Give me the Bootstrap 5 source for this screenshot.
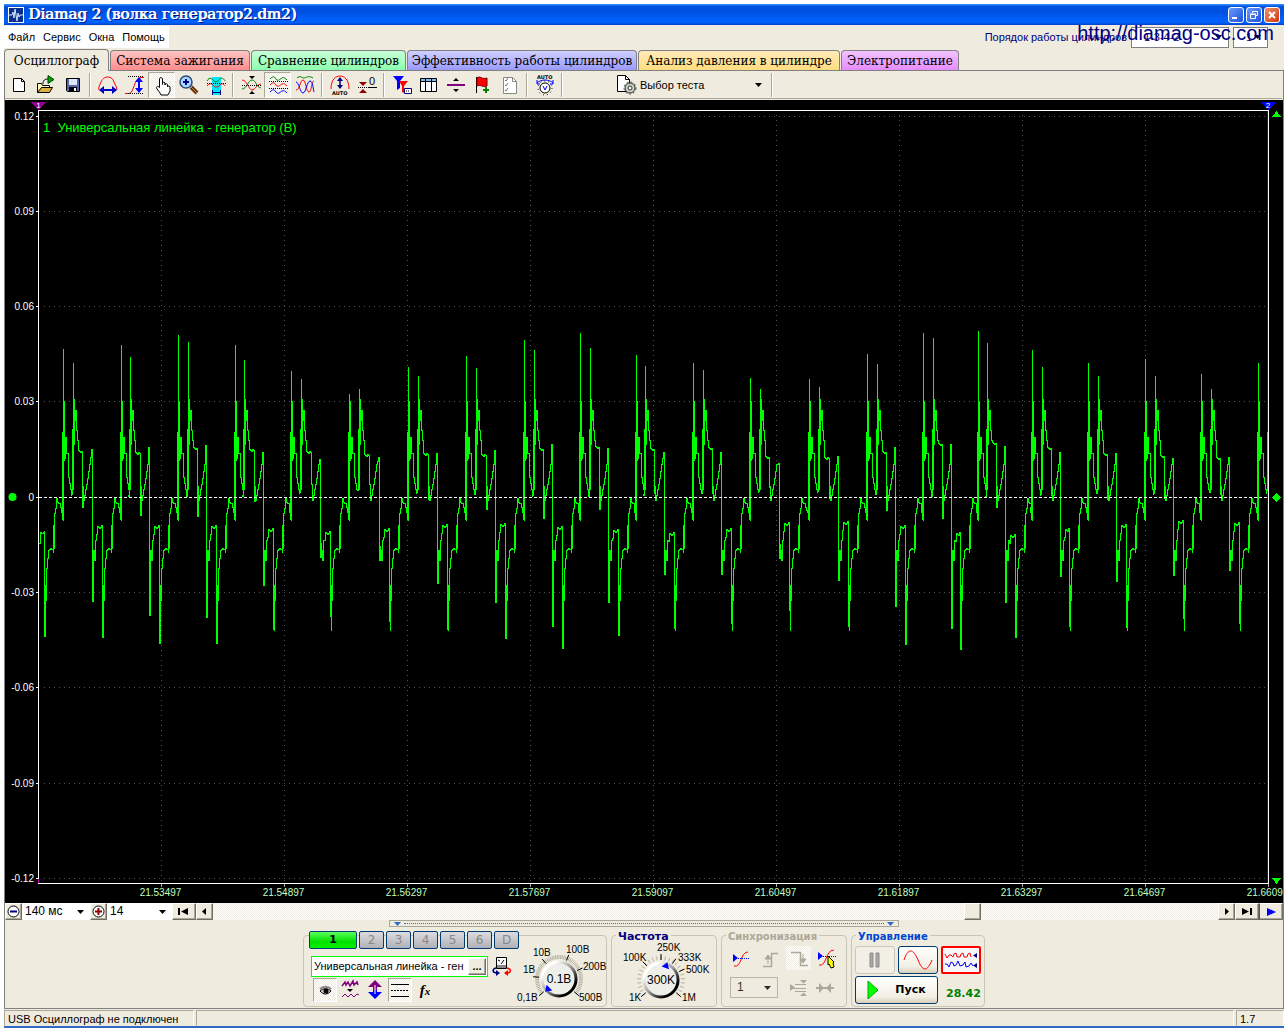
<!DOCTYPE html>
<html lang="ru">
<head>
<meta charset="utf-8">
<meta name="viewport" content="width=device-width, initial-scale=1">
<title>Diamag 2</title>
<link href="https://cdn.jsdelivr.net/npm/bootstrap@5.3.0/dist/css/bootstrap.min.css" rel="stylesheet">
<style>
:root{--face:#efebde;--edge:#aca899;--dark:#808080}
body{background:#fff;color:#000;font:11px/13px "Liberation Sans",Arial,sans-serif;padding:4px}
button,select,input{font:inherit;color:inherit;border-radius:0}
svg{display:block}
.app{min-height:calc(100vh - 8px);background:var(--face)}
.titlebar{height:21px;background:linear-gradient(#3c96ff 0,#0053e1 12%,#0050e0 35%,#0061fc 75%,#0061fc 88%,#003dc8);color:#fff;font:15px/21px "DejaVu Serif",serif;text-shadow:1px 0 #fff,2px 1px #00177a}
.wbtn{width:16px;height:16px;border:1px solid #fff;border-radius:3px;background:linear-gradient(135deg,#6a9bff,#1c4fd8);padding:0}
.wbtn.close-w{background:linear-gradient(135deg,#f09070,#d03808)}
.menubar{height:24px}
.menu-w{background:#fff;height:22px}
.menu-w a{color:#000;text-decoration:none;line-height:22px}
.order{color:navy}
.box-sel{appearance:none;background-color:#fff;border:1px solid var(--dark);height:21px;padding:0 12px}
.site{position:absolute;right:10px;top:17px;font-size:20px;line-height:24px;color:navy;text-decoration:none}
.arrow{background-image:url("data:image/svg+xml,%3Csvg xmlns='http://www.w3.org/2000/svg' width='7' height='4'%3E%3Cpath d='M0 0h7L3.5 4z'/%3E%3C/svg%3E");background-repeat:no-repeat;background-position:right 6px center}
.tabs{height:22px;gap:1px;border-bottom:1px solid var(--dark)}
.tab-i{height:20px;border:1px solid var(--dark);border-bottom:0;border-radius:4px 4px 0 0;font:12px/20px "DejaVu Serif",serif;text-align:center;color:#000;padding:0;white-space:nowrap}
.tab-i.on{height:22px;background:var(--face);width:105px;margin-bottom:-1px;position:relative;line-height:20px}
.t-r{width:140px;background:linear-gradient(#ffc4c4,#ff8c8c)}
.t-g{width:155px;background:linear-gradient(#c8ffd8,#8cffac)}
.t-b{width:230px;background:linear-gradient(#d0d0ff,#9a9aff)}
.t-y{width:202px;background:linear-gradient(#ffebb8,#ffdc80)}
.t-p{width:118px;background:linear-gradient(#f2c4ff,#e68cff)}
.frame{border:1px solid var(--dark);border-top:0}
.tools{height:28px;border-bottom:1px solid var(--edge);margin-right:1px}
.tb{width:27px;height:26px;border:1px solid transparent;background:none;padding:0;display:flex;align-items:center;justify-content:center}
.tb svg{width:24px;height:24px;overflow:visible}
.pressed{background:repeating-conic-gradient(#fff 0 25%,#efebde 0 50%) 0 0/2px 2px;border:1px solid;border-color:#aca899 #fff #fff #aca899}
.vsep{width:2px;height:24px;margin:0 3px;border-left:1px solid var(--edge);border-right:1px solid #fff}
.test{width:130px;height:24px;border:0;background-color:transparent;appearance:none;padding:2px 2px 0}
.scope{background:#000;min-height:300px;position:relative;margin-top:1px}
.scope svg{position:absolute;inset:0;width:100%;height:100%}
.scroll-r{height:17px;background:var(--face)}
.sb{height:17px;border:1px solid;border-color:#fff #716f64 #716f64 #fff;background:var(--face);padding:0;display:flex;align-items:center;justify-content:center;box-shadow:inset -1px -1px var(--edge)}
.w17{width:17px}.w24{width:24px}
.s-sel{appearance:none;border:0;background-color:#fff;height:17px;padding:0 3px;font-size:12px}
.track{background:repeating-conic-gradient(#fff 0 25%,#efebde 0 50%) 0 0/2px 2px;height:17px}
.grip{width:510px;height:7px;border:1px solid var(--edge)}
.grip i{flex:1;border-top:1px dotted #316ac5;margin:0 3px}
.bottom{height:81px;gap:4px}
.grp{position:relative;border:1px solid #c9c5b5;border-radius:4px;margin-top:8px;height:72px}
.grp-t{position:absolute;top:-6px;left:4px;padding:0 2px;background:var(--face);font:bold 10px/13px "DejaVu Sans",sans-serif;white-space:nowrap}
.ch{width:25px;height:18px;border:1px solid #003c74;border-radius:2px;background:linear-gradient(#dcdce0,#b0b0b8);color:#888;font:12px/16px "DejaVu Sans",sans-serif;padding:0}
.ch.on{width:48px;background:linear-gradient(#5cff5c,#00e000 60%,#00f000);color:#000;font-weight:bold;font-size:11px}
.chrow{gap:2px;margin-top:-5px}
.name-b{width:177px;height:21px;border:1px solid #0f0;background:#fff}
.name-b input{border:0;background:none;padding:0 2px;width:156px;outline:0}
.sm{width:24px;height:24px}
.xp{border:1px solid #003c74;border-radius:3px;background:linear-gradient(#fff,#f2efe4 75%,#d8d0bc);padding:0;display:flex;align-items:center;justify-content:center;height:28px}
.w40{width:40px}.w83{width:83px}
.xp.dis{border-color:#c9c7ba;background:#f2efe6}
.xp.red{border:2px solid red;border-radius:2px;background:#f8f6f8}
.big-t{font:bold 11px/14px "DejaVu Sans",sans-serif}
.status{height:16px;margin-top:1px;gap:2px}
.status>div{border:1px solid;border-color:var(--edge) #fff transparent var(--edge);padding:2px 3px 0;white-space:nowrap}
.st-a{width:190px}.st-b{width:48px}
.knob text{font:11px "Liberation Sans",sans-serif}
.p-row{gap:1px}
.tail{height:2px;background:#316ac5}
</style>
<script src="https://cdn.jsdelivr.net/npm/bootstrap@5.3.0/dist/js/bootstrap.bundle.min.js"></script>
</head>
<body>
<div class="app d-flex flex-column position-relative">
  <header class="titlebar d-flex align-items-center">
    <svg class="mx-1" width="16" height="16"><rect width="16" height="16" fill="#fff"/><rect x="1" y="1" width="14" height="14" fill="#08308c"/><path d="M1 8h3l1-3 1 6 1-9 2 12 1-8 1 4 1-2h3" fill="none" stroke="#cfe4ff"/></svg>
    <span class="flex-grow-1">Diamag 2 (волка генератор2.dm2)</span>
    <div class="d-flex me-1" style="gap:2px">
      <button class="wbtn" aria-label="Свернуть"><svg width="14" height="14"><path d="M3 9h5v2H3z" fill="#fff"/></svg></button>
      <button class="wbtn" aria-label="Развернуть"><svg width="14" height="14"><path d="M5.500 5V3.500h5v4H9M3.500 6.500h5v4h-5zM3 6h6" fill="none" stroke="#fff"/></svg></button>
      <button class="wbtn close-w" aria-label="Закрыть"><svg width="14" height="14"><path d="M4 4l6 6M10 4l-6 6" stroke="#fff" stroke-width="2"/></svg></button>
    </div>
  </header>
  <div class="menubar d-flex justify-content-between align-items-center">
    <nav class="menu-w d-flex gap-2 px-1"><a href="#">Файл</a><a href="#">Сервис</a><a href="#">Окна</a><a href="#">Помощь</a></nav>
    <div class="order d-flex align-items-center pe-3 gap-1">
      <label for="ord">Порядок работы цилиндров</label>
      <select id="ord" class="box-sel arrow" style="width:98px"><option>1-3-4-2</option></select>
      <select class="box-sel arrow" aria-label="Цилиндр" style="width:35px"><option>1</option></select>
    </div>
  </div>
  <a class="site" href="#">http://diamag-osc.com</a>
  <div class="tabs d-flex align-items-end" role="tablist">
    <button class="tab-i on" role="tab">Осциллограф</button>
    <button class="tab-i t-r" role="tab">Система зажигания</button>
    <button class="tab-i t-g" role="tab">Сравнение цилиндров</button>
    <button class="tab-i t-b" role="tab">Эффективность работы цилиндров</button>
    <button class="tab-i t-y" role="tab">Анализ давления в цилиндре</button>
    <button class="tab-i t-p" role="tab">Электропитание</button>
  </div>
  <main class="frame flex-grow-1 d-flex flex-column">
    <div class="tools d-flex align-items-center" role="toolbar">
      <button class="tb" aria-label="Новый"><svg viewBox="0 0 24 24"><path d="M6.500 5.500h8l3 3v10h-11z" fill="#fff" stroke="#000"/><path d="M14.500 5.500v3h3" fill="none" stroke="#000"/></svg></button>
      <button class="tb" aria-label="Открыть"><svg viewBox="0 0 24 24"><path d="M3.500 19.500v-9h4l1 2h7v3" fill="#fff8b0" stroke="#000"/><path d="M3.500 19.500l4-5h11l-3 5z" fill="#dcb040" stroke="#000"/><path d="M9 11c0-4 2-5 5-5" fill="none" stroke="#000"/><path d="M14 2.500v8l6-4z" fill="#00a000" stroke="#004800"/></svg></button>
      <button class="tb" aria-label="Сохранить"><svg viewBox="0 0 24 24"><path d="M5.500 5.500h13v13h-12l-1-1z" fill="#5a66a8" stroke="#000"/><path d="M8 6h8v6H8z" fill="#dfe6f6"/><path d="M8 14h8v5H8z" fill="#000"/><path d="M13 15h2v3h-2z" fill="#fff"/></svg></button>
      <span class="vsep"></span>
      <button class="tb" aria-label="Период"><svg viewBox="0 0 24 24"><path d="M3 17C2 14 4 12 5 9c2-4 4-5 7-5s5 2 6 5c1 3 3 5 3 8" fill="none" stroke="red"/><path d="M5 17h15" stroke="#0000c0" stroke-width="2"/><path d="M8 13v8l-5-4zM16 13v8l5-4z" fill="#0000c0"/></svg></button>
      <button class="tb" aria-label="Амплитуда"><svg viewBox="0 0 24 24"><path d="M2 20.500h4c5 0 5-16 12-16h3" fill="none" stroke="red"/><path d="M5 3.500h15M5 20.500h15" stroke="#000" stroke-dasharray="1 1"/><path d="M16 6v13" stroke="#0000ff" stroke-width="2"/><path d="M12 9l4-5 4 5zM12 15l4 5 4-5z" fill="#00f"/></svg></button>
      <button class="tb pressed" aria-label="Рука"><svg viewBox="0 0 24 24"><path d="M9.500 14V5.500q1.500-2 3 0v6-2q1.500-1 2.500.5v2-1q1.500-1 2.500.5v2-.5q2-.5 2.500 1v4l-2 4h-7c-1-3-3-4-4.500-7 0-2 2-2 3.500 0" fill="#fff" stroke="#000"/></svg></button>
      <button class="tb" aria-label="Масштаб"><svg viewBox="0 0 24 24"><path d="M14 14l6 6" stroke="#603010" stroke-width="4"/><path d="M14 14l6 6" stroke="#d09020" stroke-width="1"/><circle cx="9" cy="9" r="6" fill="#a8dcff" stroke="#304878" stroke-width="1.500"/><path d="M6 9h6M9 6v6" stroke="#0000a0" stroke-width="2"/></svg></button>
      <button class="tb" aria-label="Выделение"><svg viewBox="0 0 24 24"><path d="M8 4h9v18H8z" fill="#00e8f8"/><path d="M3 8c3-5 5-2 7 0s4 0 6-2 4 0 5 2" fill="none" stroke="#008000"/><path d="M3 13c3-4 5-2 7 0s4 1 6-1 4-1 5 1" fill="none" stroke="red"/><path d="M3 10.500h19" stroke="#000" stroke-dasharray="1 1"/><path d="M8.500 17v5M16.500 17v5M9 19.500h7" stroke="navy"/></svg></button>
      <span class="vsep"></span>
      <button class="tb" aria-label="Совместить"><svg viewBox="0 0 24 24"><path d="M3 7c5 0 7 10 10 10s4-5 9-6" fill="none" stroke="red"/><path d="M3 16c5 0 6-9 10-9s4 7 9 8" fill="none" stroke="#008000"/><path d="M3 12.500h19" stroke="#000" stroke-dasharray="1 1"/><path d="M10 3h6l-3 3zM10 21h6l-3-3z"/></svg></button>
      <button class="tb pressed" aria-label="Раздельно"><svg viewBox="0 0 24 24"><g fill="none"><path d="M4 6c3-3 4-3 6 0s4 0 6-1 3 0 5 2" stroke="#008000"/><path d="M4 12c3-3 4-3 6 0s4 0 6-1 3 0 5 2" stroke="red"/><path d="M4 19c3-3 4-3 6 0s4 0 6-1 3 0 5 2" stroke="#00f"/><path d="M3 8.500h19M3 15.500h19" stroke="#000" stroke-dasharray="1 1"/></g></svg></button>
      <button class="tb" aria-label="Наложить"><svg viewBox="0 0 24 24"><g fill="none"><path d="M4 5c3-3 5 0 7 0s4-3 9 0" stroke="#008000"/><path d="M3 17c4 0 4-10 7-10s3 12 6 12 2-11 5-11" stroke="red"/><path d="M3 9c3 0 4 11 7 11s4-12 7-12 3 8 4 11" stroke="#00f"/></g></svg></button>
      <span class="vsep"></span>
      <button class="tb" aria-label="Авто"><svg viewBox="0 0 24 24"><path d="M3 16C3 6 8 3 12 3s9 3 9 13" fill="none" stroke="red"/><path d="M12 6v9" stroke="navy" stroke-width="1.500"/><path d="M9 8l3-4 3 4zM9 12l3 4 3-4z" fill="navy"/><text x="4" y="22" font-family="DejaVu Sans" font-weight="bold" font-size="5">AUTO</text></svg></button>
      <button class="tb" aria-label="Ноль"><svg viewBox="0 0 24 24"><path d="M3 14.500h12" stroke="#000" stroke-dasharray="1 1"/><path d="M4 9h8l-4 4zM4 20h8l-4-4z" fill="#900000"/><text x="14" y="12" font-size="11" font-family="Liberation Sans">0</text><path d="M14 14.500h8" stroke="#000"/></svg></button>
      <span class="vsep"></span>
      <button class="tb" aria-label="Фильтр"><svg viewBox="0 0 24 24"><path d="M3 3h11l-4 5v7l-3 2V8z" fill="#00f"/><path d="M9 8h9l-4 5v7l-2-1v-6z" fill="red"/><path d="M14.500 15.500h7v5h-7z" fill="#fff" stroke="navy"/><path d="M16 18h4" stroke="#000" stroke-dasharray="1 1"/></svg></button>
      <button class="tb" aria-label="Таблица"><svg viewBox="0 0 24 24"><path d="M3.500 5.500h16v13h-16z" fill="#fff" stroke="#000"/><path d="M4 6h15v2H4z" fill="#80b8f0"/><path d="M4 8.500h15M8.500 6v12M14.500 6v12" stroke="#000"/></svg></button>
      <button class="tb" aria-label="Линия"><svg viewBox="0 0 24 24"><path d="M3 12h18" stroke="purple" stroke-width="2"/><path d="M9 8h6l-3-3zM9 16h6l-3 3z"/></svg></button>
      <button class="tb" aria-label="Флаг"><svg viewBox="0 0 24 24"><path d="M5.500 4v16" stroke="#000"/><path d="M6 5c3-3 5 2 10 0v8c-4 2-6-2-10 0z" fill="red" stroke="#800000"/><path d="M15 14v6M12 17h6" stroke="#008000" stroke-width="2"/></svg></button>
      <button class="tb" aria-label="Отчёт"><svg viewBox="0 0 24 24"><path d="M5.500 4.500h9l4 4v12h-13z" fill="#fff" stroke="#888"/><path d="M14.500 4.500v4h4" fill="none" stroke="#888"/><path d="M7 7l1 1 2-3M7 12l1 1 2-3M7 17l1 1 2-3" fill="none" stroke="#777"/></svg></button>
      <span class="vsep"></span>
      <button class="tb" aria-label="Авто вольтметр"><svg viewBox="0 0 24 24"><text x="4" y="6" font-family="DejaVu Sans" font-weight="bold" font-size="5">AUTO</text><circle cx="12" cy="15" r="5" fill="#fff" stroke="#000"/><circle cx="12" cy="15" r="7" fill="none" stroke="#000" stroke-dasharray="1 3"/><path d="M10 13l2 4 2-4" fill="none" stroke="#00f"/><path d="M4 10c4-4 12-4 16 0M4 7v4h3M20 7v4h-3" fill="none" stroke="#00f"/></svg></button>
      <span class="vsep"></span>
      <svg class="ms-5" width="24" height="24" viewBox="0 0 24 24"><path d="M3.500 2.500h8l4 4v12h-12z" fill="#fff" stroke="#000"/><path d="M11.500 2.500v4h4" fill="none" stroke="#000"/><circle cx="16" cy="15" r="5" fill="#c8d0c0" stroke="#333" stroke-width="1"/><circle cx="16" cy="15" r="6" fill="none" stroke="#444" stroke-dasharray="2 2"/><circle cx="16" cy="15" r="2" fill="#fff" stroke="#333"/></svg>
      <select class="test arrow" aria-label="Выбор теста"><option>Выбор теста</option></select>
      <span class="vsep"></span>
    </div>
    <div class="scope flex-grow-1"><svg id="plot" shape-rendering="crispEdges"></svg></div>
    <div class="scroll-r d-flex">
      <button class="sb w17" aria-label="Меньше"><svg width="13" height="13"><circle cx="6.500" cy="6.500" r="5.500" fill="#fff" stroke="#000"/><path d="M3 6.500h7" stroke="navy" stroke-width="2"/></svg></button>
      <select class="s-sel arrow" aria-label="Развёртка" style="width:68px"><option>140 мс</option></select>
      <button class="sb w17" aria-label="Больше"><svg width="13" height="13"><circle cx="6.500" cy="6.500" r="5.500" fill="#fff" stroke="#000"/><path d="M3 6.500h7M6.500 3v7" stroke="#900000" stroke-width="2"/></svg></button>
      <select class="s-sel arrow" aria-label="Масштаб" style="width:65px"><option>14</option></select>
      <button class="sb w24" aria-label="В начало"><svg width="12" height="7"><path d="M0 0h2v7H0zM10 0v7L3 3.500z"/></svg></button>
      <button class="sb w17" aria-label="Назад"><svg width="5" height="7"><path d="M4 0v7L0 3.500z"/></svg></button>
      <div class="track flex-grow-1 d-flex"><span style="width:74.7%"></span><button class="sb w17" aria-label="Ползунок"></button></div>
      <button class="sb w17" aria-label="Вперёд"><svg width="5" height="7"><path d="M1 0v7l4-3.500z"/></svg></button>
      <button class="sb w24" aria-label="В конец"><svg width="12" height="7"><path d="M1 0v7l7-3.500zM9 0h2v7H9z"/></svg></button>
      <button class="sb w24" aria-label="Воспроизвести" style="border-left-color:#0060ff"><svg width="9" height="8"><path d="M0 0v8l9-4z" fill="#00f"/></svg></button>
    </div>
    <div class="grip d-flex align-items-center align-self-center px-1"><svg width="7" height="4"><path d="M0 0h7L3.500 4z" fill="#316ac5"/></svg><i></i><svg width="7" height="4"><path d="M0 0h7L3.500 4z" fill="#316ac5"/></svg></div>
    <div class="bottom d-flex justify-content-center">
      <div class="grp d-flex" style="width:304px">
        <div style="margin-left:5px">
          <div class="chrow d-flex"><button class="ch on">1</button><button class="ch">2</button><button class="ch">3</button><button class="ch">4</button><button class="ch">5</button><button class="ch">6</button><button class="ch">D</button></div>
          <div class="d-flex align-items-center" style="margin:7px 0 1px 2px;gap:4px">
            <div class="name-b d-flex align-items-center"><input aria-label="Датчик" value="Универсальная линейка - ген"><button class="sb" style="width:18px" aria-label="Выбрать"><b>...</b></button></div>
            <svg width="20" height="20"><path d="M4.500.5h10v11h-10z" fill="#fff" stroke="#000"/><path d="M5 8h9v3H5z" fill="#888"/><path d="M9 7l3-4M6 3l2 1" stroke="#000"/><path d="M4 11c-4 1-4 5 1 5" fill="none" stroke="navy" stroke-width="1.500"/><path d="M4 13v6l4-3z" fill="navy"/><path d="M15 11c5 1 4 5 0 5" fill="none" stroke="red" stroke-width="1.500"/><path d="M16 13v6l-4-3z" fill="red"/></svg>
          </div>
          <div class="d-flex p-row ms-1">
            <button class="tb sm pressed" aria-label="Видимость"><svg viewBox="0 0 24 24"><path d="M7 11c3-3 8-3 11 0" fill="none" stroke="#888" stroke-width="2"/><path d="M7 13c3-3 8-3 11 0-3 4-8 4-11 0z" fill="#ccc" stroke="#000"/><circle cx="13" cy="13" r="2.500"/></svg></button>
            <button class="tb sm" aria-label="Сглаживание"><svg viewBox="0 0 24 24"><g fill="none" stroke="purple"><path d="M4 8l3-4 1 3 2-3 2 4 3-5 1 4 3-3 1 3" stroke-width="1.500"/><path d="M4 19l3-3 3 3 3-3 3 3 3-3 2 1"/></g><path d="M9 11h6l-3 3z"/></svg></button>
            <button class="tb sm" aria-label="Сдвиг"><svg viewBox="0 0 24 24"><path d="M5 9l7-7 7 7h-5v3h-4V9z" fill="purple"/><path d="M5 14l7 7 7-7h-5v-2h-4v2z" fill="#00f"/><path d="M12 7v9" stroke="#fff"/></svg></button>
            <button class="tb sm pressed" aria-label="Границы"><svg viewBox="0 0 24 24"><path d="M3 6.500h18M3 18.500h18" stroke="#000"/><path d="M3 12.500h18" stroke="#000" stroke-dasharray="2 1"/></svg></button>
            <button class="tb sm" aria-label="Функция"><i style="font:italic bold 15px/22px 'Liberation Serif',serif">f<span style="font-size:11px">x</span></i></button>
          </div>
        </div>
        <svg class="knob" data-k="v" width="96" height="70" style="margin-left:-6px"></svg>
      </div>
      <div class="grp" style="width:106px"><span class="grp-t" style="color:navy;font-size:11px">Частота</span><svg class="knob" data-k="f" width="103" height="70"></svg></div>
      <div class="grp" style="width:126px"><span class="grp-t" style="color:#aca899">Синхронизация</span>
        <div class="d-flex" style="padding:10px 0 0 6px;gap:4px">
          <button class="tb" style="width:25px" aria-label="Уровень"><svg viewBox="0 0 24 24"><path d="M5 19c8 2 6-14 14-14" fill="none" stroke="red"/><path d="M4 7v8l5-4z" fill="#00f"/><path d="M9 11.500h12" stroke="#00f" stroke-dasharray="1 1"/></svg></button>
          <button class="tb" style="width:25px" aria-label="Фронт"><svg viewBox="0 0 24 24"><path d="M5 19.500h8.500v-13H20" fill="none" stroke="#aca899" stroke-width="1.500"/><path d="M10 17V9M7 12l3-4 3 4z" fill="#aca899" stroke="#aca899"/></svg></button>
          <button class="tb track" style="width:25px;height:24px" aria-label="Спад"><svg viewBox="0 0 24 24"><path d="M4 6.500h9.500v13H21" fill="none" stroke="#aca899" stroke-width="1.500"/><path d="M16 8v8M13 13l3 4 3-4z" fill="#aca899" stroke="#aca899"/></svg></button>
          <button class="tb" style="width:25px" aria-label="Авто уровень"><svg viewBox="0 0 24 24"><path d="M3 18c8 2 6-15 15-15" fill="none" stroke="red"/><path d="M2 5v8l5-4z" fill="#00f"/><path d="M7 9.500h14" stroke="#00f" stroke-dasharray="1 1"/><path d="M12 9l6 6-1 1 1 4-3 1-2-4-1 1z" fill="#ff0" stroke="#000"/></svg></button>
        </div>
        <div class="d-flex align-items-center" style="padding:5px 0 0 8px;gap:12px">
          <select class="box-sel arrow" aria-label="Канал" disabled style="width:48px;padding-left:6px;background-color:transparent;border-color:#aca899;opacity:.8;font-size:12px"><option>1</option></select>
          <svg width="18" height="18"><path d="M0 5v7l5-3.500z" fill="#aca899"/><path d="M5 5.500h11M5 12.500h11M4 9.500h12" stroke="#aca899"/><path d="M10 1h7l-3.500 3.500zM10 17h7l-3.500-3.500z" fill="#aca899"/></svg>
          <svg width="18" height="12" style="margin-left:-4px"><path d="M0 6h18" stroke="#aca899" stroke-width="2"/><path d="M3 1v10l5-5zM15 1v10l-5-5z" fill="#aca899"/></svg>
        </div>
      </div>
      <div class="grp" style="width:134px"><span class="grp-t" style="color:#0046d5">Управление</span>
        <div class="d-flex" style="padding:10px 0 2px 3px;gap:3px">
          <button class="xp dis w40" aria-label="Пауза"><svg width="12" height="16"><path d="M1 1h3v14H1zM7 1h3v14H7z" fill="#aaa" stroke="#888"/></svg></button>
          <button class="xp w40" aria-label="Одиночный"><svg width="30" height="20"><path d="M1 10C5-2 10-2 15 10s9 12 14 0" fill="none" stroke="red"/></svg></button>
          <button class="xp red w40" aria-label="Непрерывный"><svg width="34" height="20"><g fill="none"><path d="M1 4l2 4 2-3h2l2 2 1-3 2-1 1 4h3l1-3 2-1 1 4h3l1-3 2-1 1 4" stroke="red"/><path d="M1 14h2l2 3 2-5 2 1 1 3 2-1 2-4 2 5 3-1 2-3 1 5 3-1 2-3 2 3" stroke="#00f"/></g><path d="M33 3v5l-4-2.500zM33 13v5l-4-2.500z" fill="navy"/></svg></button>
        </div>
        <div class="d-flex align-items-center" style="padding-left:3px;gap:8px">
          <button class="xp w83 big-t"><svg width="12" height="20" class="me-3"><path d="M1 1v18l10-9z" fill="#0f0" stroke="#0a0"/></svg>Пуск</button>
          <output class="big-t pt-2" style="color:#008000">28.42</output>
        </div>
      </div>
    </div>
  </main>
  <footer class="status d-flex"><div class="st-a">USB Осциллограф не подключен</div><div class="flex-grow-1"></div><div class="st-b">1.7</div></footer>
  <div class="tail"></div>
</div>
<script>
// One row per ignition period: first spike x,y; second spike x,y; shoulder y, shoulder end x, dip y;
// ramp top y, ramp end x, first drop y; low plateau y; deep drop x,y.
const P=[[63,348,73,362,451,82,507,449,92,601,526,102,637],[121,344,130,356,453,140,515,447,149,615,526,159,643],
[178,334,188,341,448,197,516,445,206,617,526,216,643],[235,344,244,359,450,254,501,452,263,585,529,273,629],
[291,370,301,378,452,311,484,459,320,557,532,330,616],[349,393,359,388,455,369,484,457,379,560,529,389,621],
[408,366,418,375,454,428,499,453,437,583,525,447,629],[466,355,476,367,455,486,509,450,495,602,524,505,638],
[524,339,534,349,449,543,518,444,552,626,527,562,648],[580,332,590,347,447,599,509,448,608,602,530,618,635],
[636,354,645,365,449,654,493,452,664,574,533,674,628],[693,362,703,369,448,712,493,452,721,574,529,731,623],
[750,377,760,388,457,769,487,463,779,558,523,789,610],[809,378,819,386,458,829,498,456,838,580,522,848,626],
[867,353,877,363,452,886,510,447,895,606,526,905,644],[923,332,933,337,444,942,518,444,951,628,533,960,649],
[978,330,987,342,443,996,507,446,1005,602,535,1015,637],[1032,349,1042,366,448,1051,495,452,1060,576,529,1069,626],
[1088,362,1098,375,454,1107,499,453,1116,581,525,1126,627],[1145,358,1155,375,456,1164,498,458,1173,575,521,1183,618],
[1201,373,1211,388,458,1220,494,457,1229,570,523,1239,623],[1258,362,1267,432]];
function rise(x,e){return [[x+1,630],[x+1,585],[x+2,600],[x+2,568],[x+3,558],[x+4,550],[x+6,548],[x+8,549],[x+9,552],[x+9,525],[x+10,548],[x+10,513],[x+11,508],[x+12,498],[x+13,502],[x+15,503],[x+16,507],[e-2,512],[e-1,508],[e-1,519]]}
let pts=[[39,543],[40,532],[42,533],[44,530],[44,636],...rise(44,63)];
P.forEach((p,i)=>{const [a,ay,b,by,sh,sx,dip,rt,rx,d1,pl,dx,d2]=p,t=Math.max(488,Math.min(497,530-ay*.1));
 pts.push([a-1,432],[a,520],[a,ay],[a,460],[a+1,400],[a+1,458],[a+2,437],[a+3,453],[a+4,453],[a+5,477],[a+7,489],[a+8,t]);
 if(!sh){pts.push([b-1,490],[b,by]);return}
 pts.push([b-2,t-1],[b-1,428],[b-1,489],[b,by],[b,444],[b+1,398],[b+1,420],[b+2,410],[b+3,430],[b+4,440],[b+5,sh-1],[b+7,sh+1],[b+8,sh-1],[sx-1,sh],[sx,dip-15],[sx,dip],[sx+1,485],[sx+1,500],[sx+2,495],[sx+3,489],[sx+5,478],[sx+7,464],[rx-1,rt],[rx,rt+4],[rx,d1],[rx+1,d1-15],[rx+1,550],[rx+2,560],[rx+3,556],[rx+3,540],[rx+4,pl+8],[rx+5,pl],[rx+7,pl+2],[dx-1,pl-1],[dx,pl],[dx,d2]);
 if(P[i+1])pts.push(...rise(dx,P[i+1][0]));
});
// The trace is sampled once per pixel column and drawn as steps.
const cols=[pts[0]];
pts.slice(1).forEach(q=>{const p=cols[cols.length-1],n=q[0]-p[0];
 for(let j=1;j<n;j++)cols.push([p[0]+j,Math.round(p[1]+(q[1]-p[1])*j/n)]);cols.push(q);});
const svg=document.getElementById('plot');
function draw(){
 const W=svg.clientWidth,H=svg.clientHeight,L=34,R=W-15,kx=(R-L)/1229,ky=H/803;
 const X=x=>L+(x-39)*kx,Y=y=>(y-100)*ky;let s='';
 const T=(x,y,t,f,a,z)=>`<text x="${x}" y="${y}" fill="${f}" text-anchor="${a}" font-size="${z||10}" font-family="Liberation Sans">${t}</text>`;
 for(let i=0;i<9;i++){const y=Math.floor(Y(116+i*95.3))+.5;
  s+=`<path d="M${L+5} ${y}H${R}" stroke="#505050" stroke-dasharray="1 4"/><path d="M${L-3} ${y}h3" stroke="#fff"/>`+T(L-5,y+3,i==4?'0':(.12-i*.03).toFixed(2),'#fff','end');}
 for(let i=0;i<10;i++){const x=Math.floor(X(161.500+i*123))+.5;
  if(i<9)s+=`<path d="M${x} ${Y(115)}V${Y(883)}" stroke="#505050" stroke-dasharray="1 4"/>`;
  s+=`<path d="M${x} ${Y(883)}v4" stroke="#aaa"/>`+T(x-1,Y(896),(21.53497+i*.014).toFixed(5),'#c0ffc0','middle');}
 s+=`<path d="M${L-.5} ${Y(110)+.5}H${R+.5}M${L-.5} ${Y(883)+.5}H${R+.5}M${L-.5} ${Y(110)}V${Y(884)}M${R+.5} ${Y(110)}V${Y(884)}" stroke="#fff" fill="none"/>`;
 s+=`<path d="M${R-.5} ${Y(111)}V${Y(883)}" stroke="#00f"/><path d="M${L-.5} ${Y(879)}v4" stroke="#c000c0"/>`;
 s+=`<path fill="none" stroke="#0f0" stroke-linecap="square" d="M${X(39)+.5} ${Y(543)+.5}${cols.map(p=>'H'+(X(p[0])+.5)+'V'+(Y(p[1])+.5)).join('')}"/>`;
 s+=`<path d="M${L} ${Y(497)+.5}H${R}" stroke="#fff" stroke-dasharray="3 2"/>`;
 s+=`<path d="M${L-8} ${Y(102)}h15l-7.500 8z" fill="#900090"/><path d="M${R-7} ${Y(102)}h15l-7.500 8z" fill="#00f"/>`;
 s+=T(L-.5,Y(108),'1','#fff','middle',8)+T(R,Y(108),'2','#fff','middle',8);
 s+=`<path d="M${R+4} ${Y(117)}h9l-4.500-6zM${R+4} ${Y(878)}h9l-4.500 6zM${R+8} ${Y(493)}l4.500 4.500-4.500 4.500-4.500-4.500z" fill="#0f0"/><circle cx="7.500" cy="${Y(497)}" r="4" fill="#0f0" shape-rendering="auto"/>`;
 s+=T(38,Y(132),'1&#160; Универсальная линейка - генератор (В)','#0f0','start',13);
 svg.innerHTML=s;
}
draw();addEventListener('resize',draw);
// Rotary selectors
const K={v:{c:[46,43],val:'0.1В',p:[-11,10,135],n:60,l:[[4,65,'0,1В'],[10,37,'1В'],[20,20,'10В'],[53,17,'100В'],[70,34,'200В'],[66,65,'500В']],a:[140,185,230,292,335,40]},
f:{c:[49,44],val:'300K',p:[5,-14,-70],n:24,l:[[17,65,'1K'],[11,25,'100K'],[45,15,'250K'],[66,25,'333K'],[74,37,'500K'],[70,65,'1M']],a:[140,225,270,305,335,40]}};
document.querySelectorAll('.knob').forEach(e=>{const k=K[e.dataset.k],[x,y]=k.c;let s=`<defs><linearGradient id="g${e.dataset.k}" x2="1" y2="1"><stop offset=".2" stop-color="#fff"/><stop offset=".5" stop-color="#999"/><stop offset=".8"/></linearGradient></defs>`;
 const ray=(d,r1,r2,c)=>{const t=d*Math.PI/180;return `<path d="M${x+r1*Math.cos(t)} ${y+r1*Math.sin(t)}L${x+r2*Math.cos(t)} ${y+r2*Math.sin(t)}" stroke="${c}"/>`};
 for(let i=0;i<=k.n;i++)s+=ray(140+i*260/k.n,20,24,'#b4b0a0');
 k.a.forEach(d=>s+=ray(d,20,26,'#000'));
 s+=`<circle cx="${x}" cy="${y}" r="17" fill="#efefea" stroke="url(#g${e.dataset.k})" stroke-width="3"/>`;
 s+=`<path transform="translate(${x+k.p[0]} ${y+k.p[1]}) rotate(${k.p[2]})" d="M4 0l-6-4v8z" fill="#00f"/>`;
 s+=`<text x="${x}" y="${y+4}" text-anchor="middle" style="font-size:12px">${k.val}</text>`;
 k.l.forEach(l=>s+=`<text x="${l[0]}" y="${l[1]}" style="font-size:10px">${l[2]}</text>`);e.innerHTML=s;});
</script>
</body>
</html>
